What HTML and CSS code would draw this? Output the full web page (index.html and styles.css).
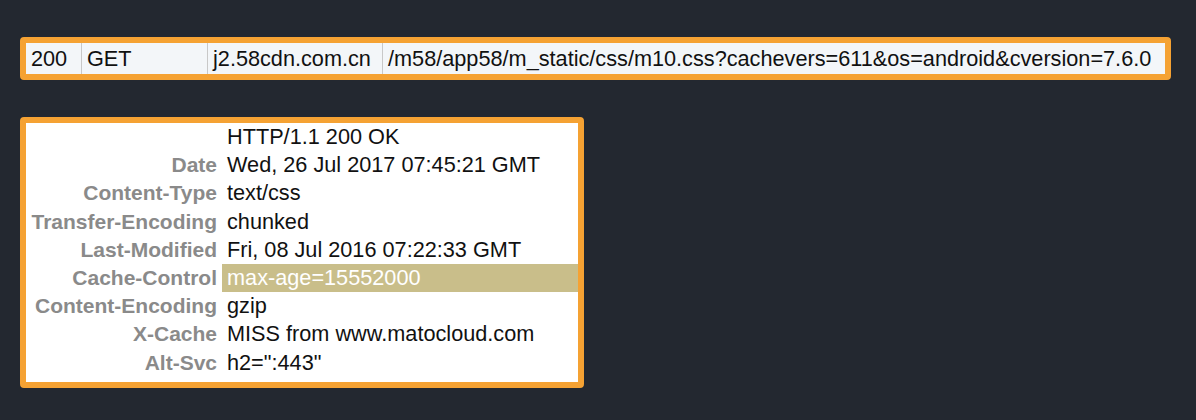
FILE: index.html
```html
<!DOCTYPE html>
<html lang="en">
<head>
    <meta charset="utf-8">
    <title>Request</title>
    <link rel="stylesheet" href="styles.css">
</head>
<body>
    <div class="req">
        <div class="cell c1">200</div>
        <div class="cell c2">GET</div>
        <div class="cell c3">j2.58cdn.com.cn</div>
        <div class="cell c4">/m58/app58/m_static/css/m10.css?cachevers=611&amp;os=android&amp;cversion=7.6.0</div>
    </div>

    <div class="headers">
        <div class="key"></div><div class="val">HTTP/1.1 200 OK</div>
        <div class="key">Date</div><div class="val">Wed, 26 Jul 2017 07:45:21 GMT</div>
        <div class="key">Content-Type</div><div class="val">text/css</div>
        <div class="key">Transfer-Encoding</div><div class="val">chunked</div>
        <div class="key">Last-Modified</div><div class="val">Fri, 08 Jul 2016 07:22:33 GMT</div>
        <div class="key">Cache-Control</div><div class="val mark">max-age=15552000</div>
        <div class="key">Content-Encoding</div><div class="val">gzip</div>
        <div class="key">X-Cache</div><div class="val">MISS from www.matocloud.com</div>
        <div class="key">Alt-Svc</div><div class="val">h2=":443"</div>
    </div>
</body>
</html>
```

FILE: styles.css
```css
body {
    margin: 0;
    padding: 37px 20px;
    background-color: #232830;
    font-family: "Liberation Sans", Arial, sans-serif;
    font-size: 21.7px;
    color: #111;
}
.req {
    display: flex;
    width: max-content;
    border: 6px solid #f5a233;
    border-radius: 4px;
    background-color: #f3f6f9;
}
.cell {
    height: 31px;
    line-height: 31px;
    padding: 0 5px;
    border-left: 1px solid #c8c8c8;
    white-space: nowrap;
}
.c1 {
    width: 45px;
    border-left: none;
}
.c2 {
    width: 115px;
}
.c3 {
    width: 164px;
}
.c4 {
    width: 772px;
}
.headers {
    display: grid;
    grid-template-columns: 196px 356px;
    margin-top: 37px;
    padding-bottom: 5px;
    width: max-content;
    border: 6px solid #f5a233;
    border-radius: 4px;
    background-color: #fff;
    line-height: 28.2px;
}
.key {
    padding-right: 5px;
    text-align: right;
    font-size: 21px;
    font-weight: bold;
    color: #8a8a8a;
    white-space: nowrap;
}
.val {
    padding-left: 5px;
    white-space: nowrap;
}
.mark {
    background-color: #c9be8a;
    color: #fff;
}
```
